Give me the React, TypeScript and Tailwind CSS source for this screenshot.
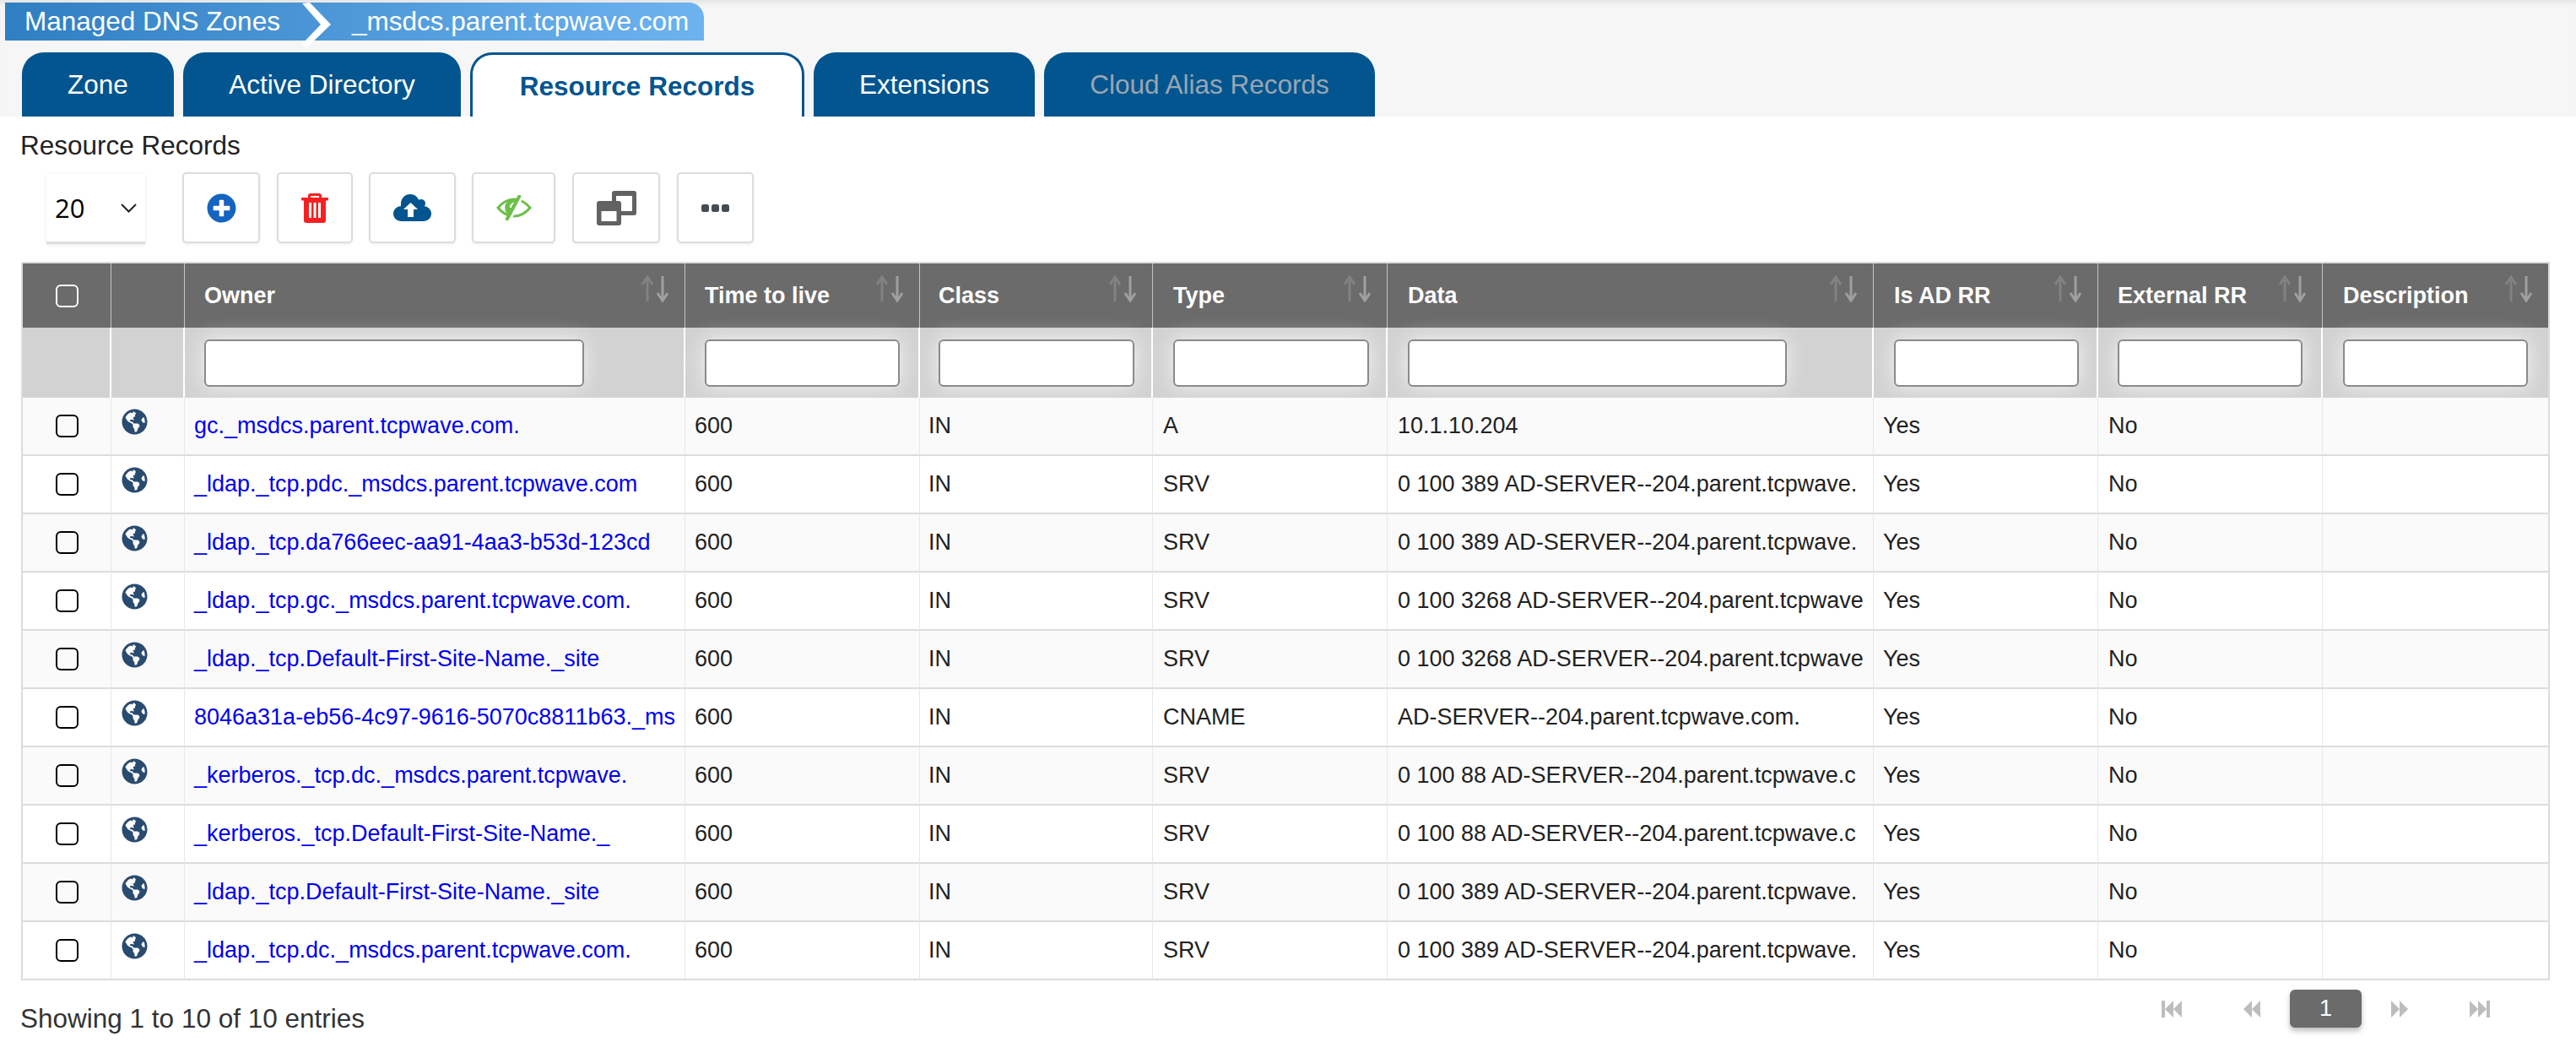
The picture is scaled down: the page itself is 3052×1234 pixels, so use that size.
import { FaGlobeAmericas, FaPlusCircle } from 'react-icons/fa'

const rows = [
  ['gc._msdcs.parent.tcpwave.com.', 'A', '10.1.10.204'],
  ['_ldap._tcp.pdc._msdcs.parent.tcpwave.com', 'SRV', '0 100 389 AD-SERVER--204.parent.tcpwave.'],
  ['_ldap._tcp.da766eec-aa91-4aa3-b53d-123cd', 'SRV', '0 100 389 AD-SERVER--204.parent.tcpwave.'],
  ['_ldap._tcp.gc._msdcs.parent.tcpwave.com.', 'SRV', '0 100 3268 AD-SERVER--204.parent.tcpwave'],
  ['_ldap._tcp.Default-First-Site-Name._site', 'SRV', '0 100 3268 AD-SERVER--204.parent.tcpwave'],
  ['8046a31a-eb56-4c97-9616-5070c8811b63._ms', 'CNAME', 'AD-SERVER--204.parent.tcpwave.com.'],
  ['_kerberos._tcp.dc._msdcs.parent.tcpwave.', 'SRV', '0 100 88 AD-SERVER--204.parent.tcpwave.c'],
  ['_kerberos._tcp.Default-First-Site-Name._', 'SRV', '0 100 88 AD-SERVER--204.parent.tcpwave.c'],
  ['_ldap._tcp.Default-First-Site-Name._site', 'SRV', '0 100 389 AD-SERVER--204.parent.tcpwave.'],
  ['_ldap._tcp.dc._msdcs.parent.tcpwave.com.', 'SRV', '0 100 389 AD-SERVER--204.parent.tcpwave.'],
]

const columns = [
  { name: 'Owner', width: 'w-[593px]', input: 'w-[450px]', pad: 'pl-[23px]' },
  { name: 'Time to live', width: 'w-[278px]', input: 'w-[231px]', pad: 'pl-[23px]' },
  { name: 'Class', width: 'w-[276px]', input: 'w-[232px]', pad: 'pl-[22px]' },
  { name: 'Type', width: 'w-[278px]', input: 'w-[232px]', pad: 'pl-[24px]' },
  { name: 'Data', width: 'w-[576px]', input: 'w-[449px]', pad: 'pl-[24px]' },
  { name: 'Is AD RR', width: 'w-[266px]', input: 'w-[219px]', pad: 'pl-[24px]' },
  { name: 'External RR', width: 'w-[266px]', input: 'w-[219px]', pad: 'pl-[23px]' },
  { name: 'Description', width: 'w-[267px]', input: 'w-[219px]', pad: 'pl-[24px]' },
]

const toolButton =
  'flex h-[84px] items-center justify-center rounded-[5px] border-2 border-[#dcdcdc] bg-white shadow-[0_2px_3px_rgba(0,0,0,0.06)]'

const SortIcon = () => (
  <svg viewBox="0 0 32 32" className="absolute right-[19px] top-[14px] h-[32px] w-[32px]" fill="none" strokeWidth="3">
    <path d="M7 31V2M1 11l6-9 6 9" stroke="#828282" />
    <path d="M25 1v29M19 21l6 9 6-9" stroke="#a0a0a0" />
  </svg>
)

const TrashIcon = () => (
  <svg viewBox="0 0 32 35" className="h-[35px] w-[32px]" fill="#f62020">
    <path d="M8 6V3a3 3 0 0 1 3-3h10a3 3 0 0 1 3 3v3h-3V3H11v3z" />
    <rect x="0" y="5" width="32" height="3.5" rx="1" />
    <path fillRule="evenodd" d="M3 8h26v24a3 3 0 0 1-3 3H6a3 3 0 0 1-3-3zM9 11v18h3V11zM14.5 11v18h3V11zM20 11v18h3V11z" />
  </svg>
)

const CloudIcon = () => (
  <svg viewBox="0 0 45 32" className="h-[32px] w-[45px]" fill="#02558f">
    <circle cx="9" cy="23" r="9" />
    <circle cx="20" cy="11" r="11" />
    <circle cx="33" cy="11" r="5" />
    <circle cx="36" cy="23" r="9" />
    <rect x="9" y="12" width="27" height="20" />
    <path d="M20.5 10L29 18h-5v9h-7v-9h-5z" fill="#fff" />
  </svg>
)

const EyeIcon = () => (
  <svg viewBox="0 0 42 30" className="h-[30px] w-[42px]" fill="none">
    <path d="M2 15C8 8 14 5 21 5s13 3 19 10c-6 7-12 10-19 10S8 22 2 15z" stroke="#6cc04a" strokeWidth="3" />
    <path d="M25 5.5A10 10 0 0 0 16 24.5L21 20z" fill="#6cc04a" />
    <path d="M22 9c-3 1-5 3-5 6" stroke="#fff" strokeWidth="2" />
    <path d="M31 1L16 29" stroke="#fff" strokeWidth="3.5" />
    <path d="M28 0L12 30" stroke="#6cc04a" strokeWidth="4" />
  </svg>
)

const WindowsIcon = () => (
  <svg viewBox="0 0 47 41" className="h-[41px] w-[47px]">
    <rect x="18" y="0" width="29" height="29" rx="3" fill="#626262" />
    <rect x="23" y="6" width="19" height="18" fill="#fff" />
    <rect x="0" y="12" width="29" height="29" rx="3" fill="#626262" />
    <rect x="5.5" y="24" width="18" height="12" fill="#fff" />
  </svg>
)

const DotsIcon = () => (
  <svg viewBox="0 0 33 9" className="h-[9px] w-[33px]" fill="#444c55">
    <rect x="0" y="0" width="9" height="9" rx="2.5" />
    <rect x="12" y="0" width="9" height="9" rx="2.5" />
    <rect x="24" y="0" width="9" height="9" rx="2.5" />
  </svg>
)

const PageArrow = ({ d, w }: { d: string; w: number }) => (
  <svg viewBox={`0 0 ${w} 20`} width={w} height={20} fill="#bdbdbd">
    <path d={d} />
  </svg>
)

export default function App() {
  return (
    <div className="min-h-[1234px] w-[3052px] bg-white font-['Liberation_Sans',Arial,sans-serif] text-[#222]">
      <div className="h-[138px] bg-[#f6f6f6] pt-[3px] shadow-[inset_0_8px_8px_-6px_rgba(0,0,0,0.1)]">
        <div className="relative ml-[6px] flex h-[45px] w-[828px] items-center rounded-tr-[18px] bg-gradient-to-r from-[#2f7fc2] to-[#6db3f0] text-[31.5px] text-white">
          <span className="ml-[23px] w-[388px]">Managed DNS Zones</span>
          <span>_msdcs.parent.tcpwave.com</span>
          <svg viewBox="0 0 40 58" className="absolute left-[350px] top-[-3px] h-[58px] w-[40px]" fill="#fff">
            <polygon points="2,4 11,3 36,29 7,57 2,52 24,29" />
          </svg>
        </div>
        <div className="ml-[26px] mt-[14px] flex h-[76px] gap-[11px] text-[31.5px]">
          <div className="flex w-[180px] items-center justify-center rounded-t-[26px] bg-[#02558f] pt-[2px] text-white">Zone</div>
          <div className="flex w-[329px] items-center justify-center rounded-t-[26px] bg-[#02558f] pt-[2px] text-white">Active Directory</div>
          <div className="flex w-[396px] items-center justify-center rounded-t-[26px] border-x-[3px] border-t-[3px] border-[#02558f] bg-white pt-[3px] font-bold text-[#02558f]">Resource Records</div>
          <div className="flex w-[262px] items-center justify-center rounded-t-[26px] bg-[#02558f] pt-[2px] text-white">Extensions</div>
          <div className="flex w-[392px] items-center justify-center rounded-t-[26px] bg-[#02558f] pt-[2px] text-[#9aa6b2]">Cloud Alias Records</div>
        </div>
      </div>

      <div className="ml-[24px] mt-[16px] text-[31.5px] leading-[36px]">Resource Records</div>

      <div className="mt-[14px] flex items-start pl-[55px]">
        <div className="mt-[2px] flex h-[83px] w-[117px] items-center justify-between border-b-[3px] border-[#dedede] bg-white pl-[10px] pr-[10px] font-['Open_Sans',sans-serif] text-[31px] text-black shadow-[0_1px_4px_rgba(0,0,0,0.1)]">
          <span>20</span>
          <svg viewBox="0 0 19 11" className="h-[11px] w-[19px]" fill="none" stroke="#222" strokeWidth="2">
            <path d="M1 1l8.5 8.5L18 1" />
          </svg>
        </div>
        <div className={`${toolButton} ml-[44px] w-[92px]`}>
          <FaPlusCircle className="text-[35px] text-[#1565c0]" />
        </div>
        <div className={`${toolButton} ml-[20px] w-[90px]`}>
          <TrashIcon />
        </div>
        <div className={`${toolButton} ml-[19px] w-[103px]`}>
          <CloudIcon />
        </div>
        <div className={`${toolButton} ml-[19px] w-[99px]`}>
          <EyeIcon />
        </div>
        <div className={`${toolButton} ml-[20px] w-[104px]`}>
          <WindowsIcon />
        </div>
        <div className={`${toolButton} ml-[20px] w-[91px]`}>
          <DotsIcon />
        </div>
      </div>

      <div className="ml-[25px] mt-[21px] w-[2996px] border-x-2 border-t-2 border-[#dcdcdc]">
        <table className="w-[2992px] table-fixed border-separate border-spacing-0 text-[27px]">
          <thead>
            <tr className="h-[76px] bg-[#6b6b6b] text-left text-white">
              <th className="w-[105px] border-r border-[#c4c4c4]">
                <input type="checkbox" className="mx-auto block h-[27px] w-[27px] appearance-none rounded-[6px] border-2 border-white" />
              </th>
              <th className="w-[87px] border-r border-[#c4c4c4]" />
              {columns.map((col) => (
                <th key={col.name} className={`${col.width} ${col.pad} relative border-r border-[#c4c4c4] font-bold last:border-r-0`}>
                  {col.name}
                  <SortIcon />
                </th>
              ))}
            </tr>
            <tr className="h-[83px] bg-[#d2d2d2]">
              <td className="border-r-2 border-white" />
              <td className="border-r-2 border-white" />
              {columns.map((col) => (
                <td key={col.name} className={`${col.pad} border-r-2 border-white last:border-r-0`}>
                  <input className={`${col.input} block h-[56px] rounded-[6px] border-2 border-[#8a8a8a] bg-white shadow-[0_0_24px_rgba(255,255,255,0.75)]`} />
                </td>
              ))}
            </tr>
          </thead>
          <tbody>
            {rows.map(([owner, type, data], i) => (
              <tr key={i} className={`h-[69px] ${i % 2 === 0 ? 'bg-[#fafafa]' : 'bg-white'}`}>
                <td className="border-b-2 border-r border-b-[#dcdcdc] border-r-[#e8e8e8]">
                  <input type="checkbox" className="mx-auto block h-[27px] w-[27px] appearance-none rounded-[6px] border-2 border-black" />
                </td>
                <td className="border-b-2 border-r border-b-[#dcdcdc] border-r-[#e8e8e8] pb-[10px] pl-[12px]">
                  <FaGlobeAmericas className="text-[31px] text-[#2a4b70]" />
                </td>
                <td className="overflow-hidden whitespace-nowrap border-b-2 border-r border-b-[#dcdcdc] border-r-[#e8e8e8] pl-[11px] text-[#0000ee]">{owner}</td>
                <td className="border-b-2 border-r border-b-[#dcdcdc] border-r-[#e8e8e8] pl-[11px]">600</td>
                <td className="border-b-2 border-r border-b-[#dcdcdc] border-r-[#e8e8e8] pl-[10px]">IN</td>
                <td className="border-b-2 border-r border-b-[#dcdcdc] border-r-[#e8e8e8] pl-[12px]">{type}</td>
                <td className="overflow-hidden whitespace-nowrap border-b-2 border-r border-b-[#dcdcdc] border-r-[#e8e8e8] pl-[12px]">{data}</td>
                <td className="border-b-2 border-r border-b-[#dcdcdc] border-r-[#e8e8e8] pl-[11px]">Yes</td>
                <td className="border-b-2 border-r border-b-[#dcdcdc] border-r-[#e8e8e8] pl-[12px]">No</td>
                <td className="border-b-2 border-b-[#dcdcdc]" />
              </tr>
            ))}
          </tbody>
        </table>
      </div>

      <div className="mt-[11px] flex items-start justify-between pl-[24px] pr-[102px]">
        <span className="mt-[16px] text-[31.5px] leading-[36px] text-[#333]">Showing 1 to 10 of 10 entries</span>
        <div className="flex items-center">
          <PageArrow w={24} d="M0 0h4v20H0zM14 0v20L4 10zM24 0v20L14 10z" />
          <div className="w-[72px]" />
          <PageArrow w={21} d="M11 0v20L1 10zM21 0v20L11 10z" />
          <div className="w-[35px]" />
          <div className="flex h-[45px] w-[85px] items-center justify-center rounded-[6px] bg-[#6b6b6b] text-[27px] text-white shadow-[0_4px_6px_rgba(0,0,0,0.25)]">1</div>
          <div className="w-[35px]" />
          <PageArrow w={21} d="M0 0v20l10-10zM10 0v20l10-10z" />
          <div className="w-[72px]" />
          <PageArrow w={24} d="M0 0v20l10-10zM10 0v20l10-10zM20 0h4v20h-4z" />
        </div>
      </div>
    </div>
  )
}
